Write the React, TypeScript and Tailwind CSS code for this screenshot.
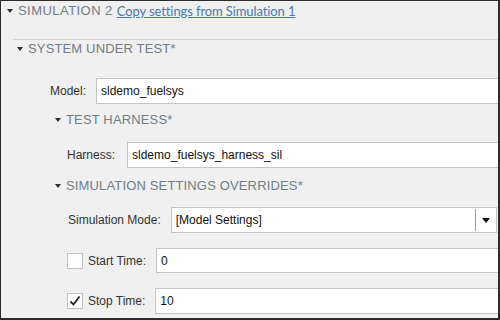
const font = { fontFamily: '"Liberation Sans", Arial, sans-serif' };

function Caret() {
  return (
    <svg width="6" height="4" viewBox="0 0 6 4" className="shrink-0">
      <path d="M0 0 L6 0 L3 4 Z" fill="#2f2f2f" />
    </svg>
  );
}

function SectionTitle({ text, className }: { text: string; className?: string }) {
  return (
    <div className={`flex items-center gap-[5px] h-[16px] ${className ?? ''}`}>
      <Caret />
      <span className="text-[13px] leading-[16px] tracking-[0.15px] text-[#727d87] uppercase">{text}</span>
    </div>
  );
}

function TextField({ value, className }: { value: string; className?: string }) {
  return (
    <div
      className={`flex-1 flex items-center bg-white border border-[#c4c4c4] pl-[4px] text-[12px] text-[#111] -mr-[6px] ${className ?? ''}`}
    >
      {value}
    </div>
  );
}

function CheckBox({ checked }: { checked: boolean }) {
  return (
    <div className="w-[16px] h-[16px] bg-white border border-[#c2c2c2] flex items-center justify-center shrink-0">
      {checked && (
        <svg width="12" height="12" viewBox="0 0 12 12">
          <path d="M1.5 6.5 L4.5 9.5 L10.5 1.5" stroke="#222" strokeWidth="1.8" fill="none" />
        </svg>
      )}
    </div>
  );
}

export default function App() {
  return (
    <div
      className="w-[500px] h-[320px] overflow-hidden border-t border-l border-r-2 border-b-2 border-[#2c2c2c] bg-[#f0f0f0]"
      style={font}
    >
      <div className="h-[38px] flex items-start pt-[2px] pl-[6px] gap-[5px]">
        <div className="h-[16px] flex items-center">
          <Caret />
        </div>
        <span className="text-[13px] leading-[16px] tracking-[0.45px] text-[#727d87]">SIMULATION 2</span>
        <a
          href="#"
          className="text-[13px] leading-[16px] tracking-[-0.1px] text-[#4a78ad] underline -ml-[1px]"
          style={{ fontFamily: 'Lato, "Liberation Sans", sans-serif' }}
        >
          Copy settings from Simulation 1
        </a>
      </div>

      <div className="ml-[12px] border-t border-[#d3d3d3] h-[290px] border-b-2 border-b-[#dcdcdc]">
        <SectionTitle text="System Under Test*" className="mt-[1px] pl-[4px]" />

        <div className="flex items-center gap-[10px] pl-[37px] mt-[21px] h-[26px]">
          <span className="text-[12px] text-[#333]">Model:</span>
          <TextField value="sldemo_fuelsys" className="h-[26px]" />
        </div>

        <SectionTitle text="Test Harness*" className="mt-[8px] pl-[42px]" />

        <div className="flex items-center gap-[12px] pl-[54px] mt-[14px] h-[26px]">
          <span className="text-[12px] text-[#333]">Harness:</span>
          <TextField value="sldemo_fuelsys_harness_sil" className="h-[26px]" />
        </div>

        <SectionTitle text="Simulation Settings Overrides*" className="mt-[10px] pl-[42px]" />

        <div className="flex items-center gap-[10px] pl-[55px] mt-[13px] h-[26px]">
          <span className="text-[12px] text-[#333]">Simulation Mode:</span>
          <div className="flex-1 h-[26px] flex items-center bg-white border border-[#c4c4c4] mr-[1px]">
            <span className="flex-1 pl-[4px] text-[12px] text-[#111]">[Model Settings]</span>
            <div className="w-px h-[22px] bg-[#9a9a9a]" />
            <div className="w-[20px] flex justify-center">
              <svg width="8" height="5" viewBox="0 0 8 5">
                <path d="M0 0 L8 0 L4 5 Z" fill="#111" />
              </svg>
            </div>
          </div>
        </div>

        <div className="flex items-center pl-[54px] mt-[15px] h-[25px]">
          <CheckBox checked={false} />
          <span className="ml-[5px] text-[12px] text-[#333]">Start Time:</span>
          <TextField value="0" className="h-[25px] ml-[10px]" />
        </div>

        <div className="flex items-center pl-[54px] mt-[15px] h-[26px]">
          <CheckBox checked />
          <span className="ml-[5px] text-[12px] text-[#333]">Stop Time:</span>
          <TextField value="10" className="h-[26px] ml-[10px]" />
        </div>
      </div>
    </div>
  );
}
